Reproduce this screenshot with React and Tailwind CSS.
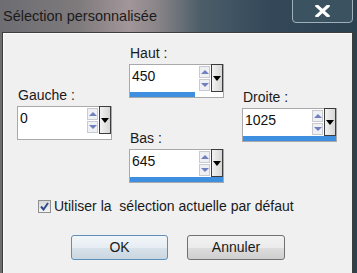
import React from 'react';

// one numeric field: text area + spinner + dropdown, with the blue value bar under it
const Field = ({ label, value, bar }) => {
  return (
    <div className="flex flex-col">
      <div className="h-[16px] leading-[16px] text-[14px] text-[#1a1a1a] pl-[1px]">{label}</div>
      <div className="mt-[3px] h-[34px] flex flex-col border border-[#a9a9a9] bg-white">
        <div className="flex-1 flex">
          <div className="flex-1 pl-[2px] pt-[3px] text-[14px] leading-[16px] text-[#111]">{value}</div>
          <div className="w-[11px] flex flex-col gap-[1px] py-[1px]">
            <div className="flex-1 flex items-center justify-center border border-[#c9c9d2] bg-[#eef0f4]">
              <div className="w-0 h-0 border-l-[4px] border-r-[4px] border-b-[4px] border-l-transparent border-r-transparent border-b-[#6f7fbf]" />
            </div>
            <div className="flex-1 flex items-center justify-center border border-[#c9c9d2] bg-[#eef0f4]">
              <div className="w-0 h-0 border-l-[4px] border-r-[4px] border-t-[4px] border-l-transparent border-r-transparent border-t-[#6f7fbf]" />
            </div>
          </div>
          <div className="w-[12px] ml-[1px] -mt-[1px] flex items-center justify-center border border-[#3c3c3c] bg-[linear-gradient(90deg,#f2f2f2,#d6d6d6)]">
            <div className="w-0 h-0 border-l-[4px] border-r-[4px] border-t-[5px] border-l-transparent border-r-transparent border-t-black" />
          </div>
        </div>
        <div className="h-[5px] flex">
          {bar && <div className={bar + " h-full bg-[#3f8fe1]"} />}
        </div>
      </div>
    </div>
  );
};

export default function App() {
  return (
    <div className="w-[357px] h-[273px] overflow-hidden flex flex-col font-['Liberation_Sans',Arial,sans-serif] bg-[linear-gradient(90deg,#6d6d72_0%,#7e7a7c_22%,#a2969a_36%,#8a8588_44%,#4d5e69_56%,#34485a_75%,#2b4251_100%)]">
      {/* title bar */}
      <div className="h-[32px] shrink-0 flex items-start justify-between pl-[3px] pr-[4px]">
        <span className="mt-[7px] text-[14.5px] leading-[18px] text-[#1b1b1b]">Sélection personnalisée</span>
        <div className="w-[61px] h-[24px] -mt-[1px] rounded-b-[4px] border border-[#9fb0ba] bg-[#3b5261] flex items-center justify-center">
          <svg width="15" height="12" viewBox="0 0 15 12">
            <path d="M2 1 L13 11 M13 1 L2 11" stroke="#fff" strokeWidth="3.2" strokeLinecap="square" />
          </svg>
        </div>
      </div>

      {/* client area */}
      <div className="flex-1 ml-[2px] mr-[4px] border-l border-t border-r border-[#3d3d3d]">
        <div className="h-full border-l border-t border-[#fbfbfb] bg-[#f0f0f0] flex flex-col pl-[13px] pt-[11px]">
          <div className="flex">
            <div className="w-[95px] pt-[42px]">
              <Field label="Gauche :" value="0" />
            </div>
            <div className="w-[95px] ml-[17px] flex flex-col">
              <Field label="Haut :" value="450" bar="w-[70%]" />
              <div className="mt-[32px]">
                <Field label="Bas :" value="645" bar="w-full" />
              </div>
            </div>
            <div className="w-[95px] ml-[18px] pt-[44px]">
              <Field label="Droite :" value="1025" bar="w-full" />
            </div>
          </div>

          <div className="mt-[15px] ml-[21px] flex items-center gap-[3px]">
            <div className="w-[13px] h-[13px] border border-[#8e8f8f] bg-[linear-gradient(180deg,#d8d8d8,#f4f4f4)] flex items-center justify-center">
              <svg width="9" height="9" viewBox="0 0 9 9">
                <path d="M1 4.5 L3.5 7.5 L8 1" fill="none" stroke="#2d4a8e" strokeWidth="2" />
              </svg>
            </div>
            <span className="text-[14px] leading-[16px] text-[#1a1a1a] whitespace-pre">Utiliser la  sélection actuelle par défaut</span>
          </div>

          <div className="mt-[21px] ml-[54px] flex gap-[19px]">
            <div className="w-[97px] h-[25px] rounded-[3px] border border-[#5d8fb8] bg-[linear-gradient(180deg,#f2f6f9_0%,#e6edf3_50%,#d8e2ea_51%,#cad6e0_100%)] flex items-center justify-center text-[14px] text-[#1a1a1a]">OK</div>
            <div className="w-[98px] h-[25px] rounded-[3px] border border-[#707070] bg-[linear-gradient(180deg,#f2f2f2_0%,#ebebeb_50%,#dddddd_51%,#cfcfcf_100%)] flex items-center justify-center text-[14px] text-[#1a1a1a]">Annuler</div>
          </div>
        </div>
      </div>
    </div>
  );
}
